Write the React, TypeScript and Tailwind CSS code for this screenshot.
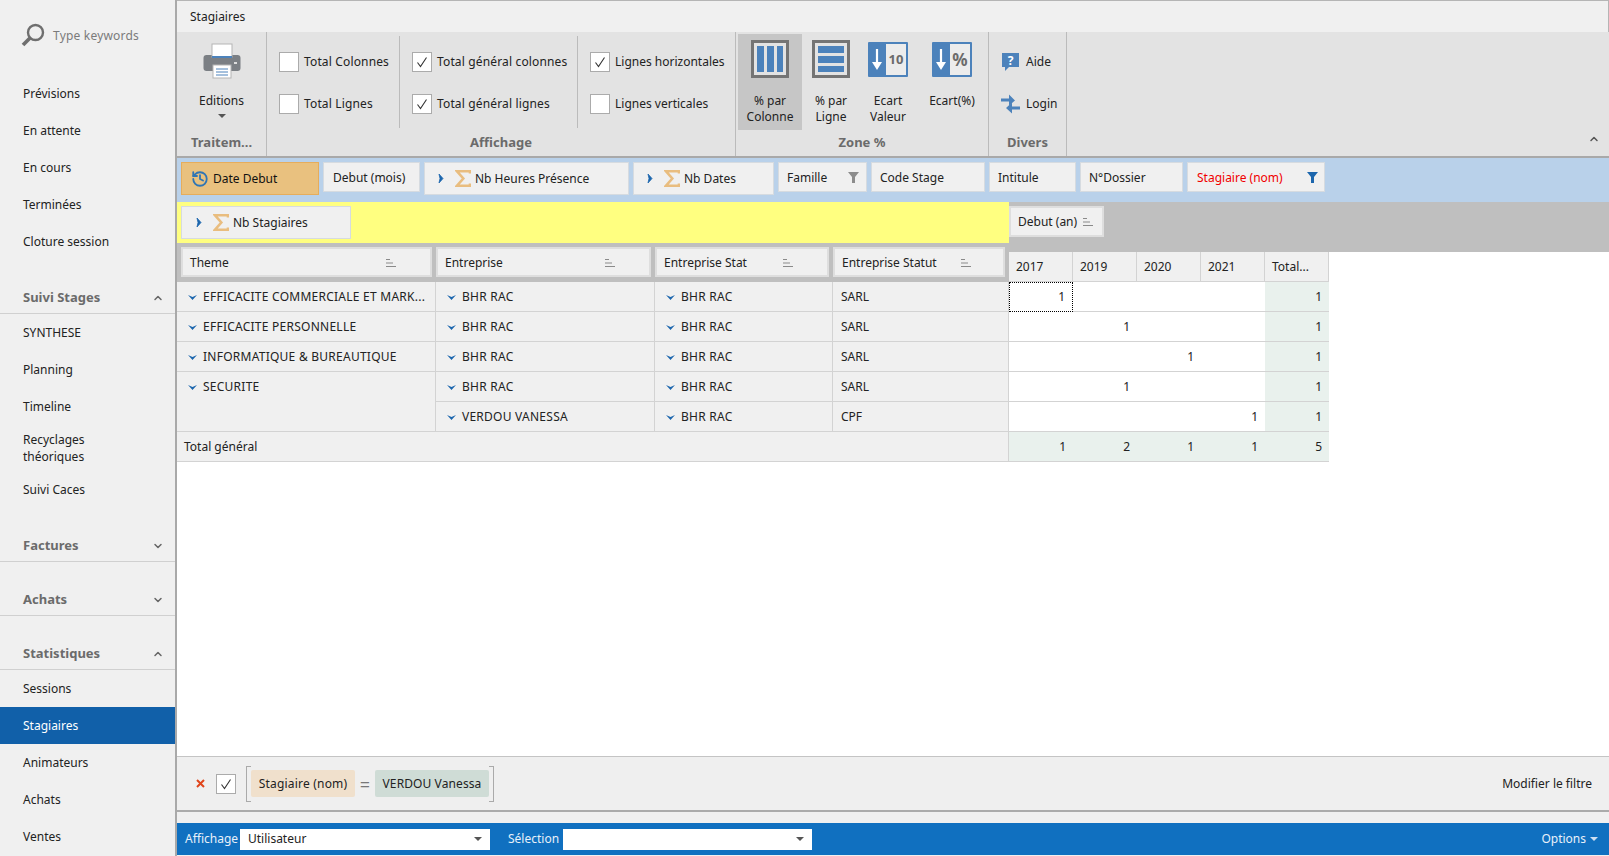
import { ChevronDown, ChevronUp, History } from "lucide-react";

const font = { fontFamily: '"Noto Sans", Tahoma, sans-serif' };

const Sort = () => (
  <svg width="11" height="10" viewBox="0 0 11 10" className="shrink-0">
    <path d="M0 1.500h4M0 5h7M0 8.500h10" stroke="#8a8a8a" strokeWidth="1" fill="none" />
  </svg>
);

const Funnel = ({ color }: { color: string }) => (
  <svg width="11" height="11" viewBox="0 0 11 11" className="shrink-0">
    <path d="M0 0h11L7 5v6H4V5z" fill={color} />
  </svg>
);

const Sigma = () => (
  <svg width="16" height="17" viewBox="0 0 16 17" className="shrink-0">
    <path d="M15 3.500V1.300H2L8.300 8.500L2 15.700H15v-2.200" stroke="#e9bd7f" strokeWidth="2.600" fill="none" />
  </svg>
);

const Right = () => (
  <svg width="6" height="9" viewBox="0 0 6 9" className="shrink-0">
    <path d="M1 0l4 4.500L1 9l1-4.500z" fill="#1c66ad" stroke="#1c66ad" strokeWidth="0.8" />
  </svg>
);

const Down = () => (
  <svg width="9" height="6" viewBox="0 0 9 6" className="shrink-0">
    <path d="M0 1l4.500 2L9 1 4.500 6z" fill="#1c66ad" />
  </svg>
);

const Check = ({ on }: { on?: boolean }) => (
  <div className="flex items-center justify-center bg-white border border-[#ababab] shrink-0 w-[20px] h-[20px]">
    {on && (
      <svg width="12" height="12" viewBox="0 0 12 12">
        <path d="M1.500 6.500L4.500 10.500L10.500 1.500" stroke="#333" strokeWidth="1.100" fill="none" />
      </svg>
    )}
  </div>
);

const CheckRow = ({ label, on }: { label: string; on?: boolean }) => (
  <div className="flex items-center h-[20px] gap-[5px] whitespace-nowrap">
    <Check on={on} />
    <span>{label}</span>
  </div>
);

const SideItem = ({ label, active }: { label: string; active?: boolean }) => (
  <div className={`h-[37px] flex items-center pl-[23px] ${active ? "bg-[#1160a9] text-white" : ""}`}>{label}</div>
);

const SideHead = ({ label, open, mt }: { label: string; open?: boolean; mt: string }) => (
  <div className={`h-[34px] pt-[2px] flex items-center justify-between pl-[23px] pr-[11px] border-b border-[#d0d0d0] ${mt}`}>
    <span className="font-bold text-[#6b6b6b] text-[13px]">{label}</span>
    {open ? <ChevronUp size={12} strokeWidth={3} color="#666" /> : <ChevronDown size={12} strokeWidth={3} color="#666" />}
  </div>
);

const Sidebar = () => (
  <div className="w-[175px] shrink-0 flex flex-col">
    <div className="h-[75px] pt-[23px] pl-[21px] flex items-start gap-[8px]">
      <svg width="24" height="24" viewBox="0 0 24 24">
        <circle cx="14.500" cy="9.500" r="7.500" stroke="#6f6f6f" strokeWidth="2.400" fill="none" />
        <path d="M9 15L2 22" stroke="#6f6f6f" strokeWidth="3.800" />
      </svg>
      <span className="text-[#7b7b7b] mt-[4px] tracking-[0.2px]">Type keywords</span>
    </div>
    <SideItem label="Prévisions" />
    <SideItem label="En attente" />
    <SideItem label="En cours" />
    <SideItem label="Terminées" />
    <SideItem label="Cloture session" />
    <SideHead label="Suivi Stages" open mt="mt-[20px]" />
    <SideItem label="SYNTHESE" />
    <SideItem label="Planning" />
    <SideItem label="Timeline" />
    <div className="h-[46px] flex items-center pl-[23px] leading-[17px]">
      Recyclages
      <br />
      théoriques
    </div>
    <SideItem label="Suivi Caces" />
    <SideHead label="Factures" mt="mt-[20px]" />
    <SideHead label="Achats" mt="mt-[20px]" />
    <SideHead label="Statistiques" open mt="mt-[20px]" />
    <SideItem label="Sessions" />
    <SideItem label="Stagiaires" active />
    <SideItem label="Animateurs" />
    <SideItem label="Achats" />
    <SideItem label="Ventes" />
  </div>
);

const GroupLabel = ({ label }: { label: string }) => (
  <div className="h-[26px] flex items-center justify-center font-bold text-[#6b6b6b] text-[13px]">{label}</div>
);

const ColsIcon = () => (
  <svg width="38" height="38" viewBox="0 0 38 38">
    <rect x="1.500" y="1.500" width="35" height="35" fill="#e3e3e3" stroke="#747474" strokeWidth="3" />
    <path d="M6 6h7v26H6zM16 6h7v26h-7zM26 6h6v26h-6z" fill="#4c82bb" />
  </svg>
);

const RowsIcon = () => (
  <svg width="38" height="38" viewBox="0 0 38 38">
    <rect x="1.500" y="1.500" width="35" height="35" fill="#e3e3e3" stroke="#747474" strokeWidth="3" />
    <path d="M6 6h26v7H6zM6 16h26v7H6zM6 26h26v6H6z" fill="#4c82bb" />
  </svg>
);

const EcartIcon = ({ text, size }: { text: string; size: string }) => (
  <div className="w-[40px] h-[35px] bg-[#4c82bb] flex rounded-[1px] mt-[2px]">
    <div className="w-[18px] flex items-center justify-center">
      <svg width="10" height="22" viewBox="0 0 10 22">
        <path d="M5 0v16" stroke="#fff" strokeWidth="2.200" />
        <path d="M0 13h10l-5 8z" fill="#fff" />
      </svg>
    </div>
    <div className={`my-[2px] mr-[2px] flex-1 bg-[#ececec] flex items-center justify-center font-bold text-[#6b6b6b] ${size}`}>
      {text}
    </div>
  </div>
);

const ZoneBtn = ({ w, icon, lines, active }: { w: string; icon: React.ReactNode; lines: string[]; active?: boolean }) => (
  <div className={`${w} h-[96px] flex flex-col items-center ${active ? "bg-[#c6c6c6]" : ""}`}>
    <div className="h-[59px] pt-[6px] flex justify-center">{icon}</div>
    {lines.map((l) => (
      <div key={l} className="h-[16px] leading-[16px] whitespace-nowrap">
        {l}
      </div>
    ))}
  </div>
);

const Ribbon = () => (
  <div className="h-[126px] bg-[#e3e3e3] flex border-b-2 border-[#a9a9a9] shrink-0">
    <div className="w-[90px] border-r border-[#bbbbbb] flex flex-col">
      <div className="flex-1 flex flex-col items-center">
        <svg width="38" height="36" viewBox="0 0 38 36" className="mt-[11px]">
          <rect x="0.500" y="12" width="37" height="16" rx="3" fill="#7b7f84" />
          <rect x="9" y="1" width="20" height="13" fill="#fff" stroke="#b5b5b5" />
          <rect x="9" y="13" width="20" height="2" fill="#4c82bb" />
          <rect x="10" y="22" width="18" height="13" fill="#fff" stroke="#b5b5b5" />
          <path d="M13 26h12M13 29h12M13 32h12" stroke="#4c82bb" strokeWidth="1" />
          <rect x="31" y="19" width="3" height="2" fill="#ddd" />
        </svg>
        <span className="mt-[14px] leading-[16px]">Editions</span>
        <div className="mt-[5px] w-0 h-0 border-x-[4px] border-x-transparent border-t-[4px] border-t-[#555]" />
      </div>
      <GroupLabel label="Traitem..." />
    </div>
    <div className="w-[469px] border-r border-[#bbbbbb] flex flex-col">
      <div className="flex-1 flex items-start">
        <div className="w-[133px] mt-[4px] h-[92px] pl-[12px] pt-[16px] border-r border-[#bbbbbb] flex flex-col gap-[22px] tracking-[0.15px]">
          <CheckRow label="Total Colonnes" />
          <CheckRow label="Total Lignes" />
        </div>
        <div className="w-[178px] mt-[4px] h-[92px] pl-[12px] pt-[16px] border-r border-[#bbbbbb] flex flex-col gap-[22px] tracking-[0.15px]">
          <CheckRow label="Total général colonnes" on />
          <CheckRow label="Total général lignes" on />
        </div>
        <div className="mt-[4px] h-[92px] pl-[12px] pt-[16px] flex flex-col gap-[22px]">
          <CheckRow label="Lignes horizontales" on />
          <CheckRow label="Lignes verticales" />
        </div>
      </div>
      <GroupLabel label="Affichage" />
    </div>
    <div className="w-[253px] border-r border-[#bbbbbb] flex flex-col">
      <div className="flex-1 flex items-start pl-[2px] pt-[2px]">
        <ZoneBtn w="w-[64px]" icon={<ColsIcon />} lines={["% par", "Colonne"]} active />
        <ZoneBtn w="w-[58px]" icon={<RowsIcon />} lines={["% par", "Ligne"]} />
        <ZoneBtn w="w-[56px]" icon={<EcartIcon text="10" size="text-[13px]" />} lines={["Ecart", "Valeur"]} />
        <ZoneBtn w="w-[72px]" icon={<EcartIcon text="%" size="text-[17px]" />} lines={["Ecart(%)"]} />
      </div>
      <GroupLabel label="Zone %" />
    </div>
    <div className="w-[78px] border-r border-[#bbbbbb] flex flex-col">
      <div className="flex-1 pl-[12px] pt-[19px] flex flex-col gap-[21px]">
        <div className="flex items-center h-[21px] gap-[6px]">
          <svg width="19" height="20" viewBox="0 0 19 20">
            <path d="M1 1h17v14H8l-4 4v-4H1z" fill="#4c82bb" />
            <text x="9.500" y="12.500" textAnchor="middle" fontSize="12" fontWeight="700" fill="#fff" fontFamily="Noto Sans">?</text>
          </svg>
          <span>Aide</span>
        </div>
        <div className="flex items-center h-[21px] gap-[6px]">
          <svg width="19" height="20" viewBox="0 0 19 20">
            <path d="M0 4.500h8v-4l6 6-6 5v-4H0z" fill="#4c82bb" />
            <path d="M19 12.500h-8v-4l-6 5.500 6 5.500v-4h8z" fill="#4c82bb" />
          </svg>
          <span>Login</span>
        </div>
      </div>
      <GroupLabel label="Divers" />
    </div>
    <div className="flex-1 flex items-end justify-end pr-[9px] pb-[11px]">
      <ChevronUp size={12} strokeWidth={3} color="#555" />
    </div>
  </div>
);

const Chip = ({ w, h, children, tone }: { w: string; h: string; children: React.ReactNode; tone?: string }) => (
  <div className={`${w} ${h} shrink-0 flex items-center border whitespace-nowrap ${tone ?? "bg-[#f0f0f0] border-[#d6dbe0]"}`}>{children}</div>
);

const FieldBar = () => (
  <div className="h-[44px] bg-[#b9d1ea] flex items-start gap-[4px] pl-[4px] pt-[4px] shrink-0">
    <Chip w="w-[138px]" h="h-[33px]" tone="bg-[#e9c17f] border-[#e6ad5c] pl-[9px] gap-[4px]">
      <History size={18} color="#2f75b5" strokeWidth={2.400} />
      <span className="text-[#111]">Date Debut</span>
    </Chip>
    <Chip w="w-[97px]" h="h-[30px] pl-[9px] pt-[1px]">Debut (mois)</Chip>
    <Chip w="w-[205px]" h="h-[33px] pl-[13px] gap-[11px]">
      <Right />
      <span className="flex items-center gap-[4px]">
        <Sigma />
        Nb Heures Présence
      </span>
    </Chip>
    <Chip w="w-[141px]" h="h-[33px] pl-[13px] gap-[11px]">
      <Right />
      <span className="flex items-center gap-[4px]">
        <Sigma />
        Nb Dates
      </span>
    </Chip>
    <Chip w="w-[89px]" h="h-[30px] pl-[8px] pr-[7px] pt-[1px] justify-between">
      Famille
      <Funnel color="#8c8c8c" />
    </Chip>
    <Chip w="w-[114px]" h="h-[30px] pl-[8px] pt-[1px]">Code Stage</Chip>
    <Chip w="w-[87px]" h="h-[30px] pl-[8px] pt-[1px]">Intitule</Chip>
    <Chip w="w-[103px]" h="h-[30px] pl-[8px] pt-[1px]">N°Dossier</Chip>
    <Chip w="w-[138px]" h="h-[30px] pl-[9px] pr-[6px] pt-[1px] justify-between">
      <span className="text-[#f00000]">Stagiaire (nom)</span>
      <Funnel color="#1c66ad" />
    </Chip>
  </div>
);

const HeadBtn = ({ w, label, pr }: { w: string; label: string; pr?: string }) => (
  <div className={`${w} h-[30px] shrink-0 bg-[#f0f0f0] border-2 border-[#dedede] flex items-center justify-between pl-[7px] pt-[1px] ${pr ?? "pr-[33px]"} whitespace-nowrap`}>
    {label}
    <Sort />
  </div>
);

const years = ["2017", "2019", "2020", "2021", "Total..."];
const cols = "grid grid-cols-[259px_219px_178px_176px_64px_64px_64px_64px_64px] w-[1152px]";
const leftCell = "bg-[#f0f0f0] border-r border-b border-[#d3d3d3] flex items-center whitespace-nowrap";

const Expand = ({ label }: { label: string }) => (
  <div className={`${leftCell} pl-[11px] gap-[6px] tracking-[0.25px]`}>
    <Down />
    <span>{label}</span>
  </div>
);

const Vals = ({ values, dotted }: { values: (string | null)[]; dotted?: boolean }) => (
  <>
    {values.map((v, i) => (
      <div
        key={i}
        className={`flex items-center justify-end pr-[7px] border-b border-[#d3d3d3] ${dotted && i === 0 ? "border border-dotted border-black" : ""} ${i === 4 ? "bg-[#e9f1ed]" : "bg-white"}`}
      >
        {v}
      </div>
    ))}
  </>
);

const Pivot = () => (
  <div className="flex-1 bg-white flex flex-col min-h-0">
    <div className="flex shrink-0">
      <div className="w-[832px] shrink-0">
        <div className="h-[41px] bg-[#ffff80] pl-[4px] pt-[4px]">
          <Chip w="w-[170px]" h="h-[33px] pl-[14px] gap-[11px]">
            <Right />
            <span className="flex items-center gap-[4px]">
              <Sigma />
              Nb Stagiaires
            </span>
          </Chip>
        </div>
        <div className="h-[39px] bg-[#bfbfbf] flex items-start pt-[4px] pl-[4px] gap-[4px]">
          <HeadBtn w="w-[251px]" label="Theme" />
          <HeadBtn w="w-[215px]" label="Entreprise" />
          <HeadBtn w="w-[174px]" label="Entreprise Stat" />
          <HeadBtn w="w-[172px]" label="Entreprise Statut" pr="pr-[31px]" />
        </div>
      </div>
      <div className="flex-1 flex flex-col">
        <div className="h-[50px] bg-[#bfbfbf]">
          <div className="w-[95px] h-[31px] bg-[#f0f0f0] border-2 border-[#dedede] flex items-center justify-between pl-[7px] pr-[8px] whitespace-nowrap mt-[4px]">
            Debut (an)
            <Sort />
          </div>
        </div>
        <div className="h-[30px] flex">
          {years.map((y) => (
            <div key={y} className="w-[64px] bg-[#f0f0f0] border-r border-b border-[#d3d3d3] flex items-center pl-[7px] whitespace-nowrap">
              {y}
            </div>
          ))}
        </div>
      </div>
    </div>
    <div className={`${cols} auto-rows-[30px]`}>
      <Expand label="EFFICACITE COMMERCIALE ET MARK..." />
      <Expand label="BHR RAC" />
      <Expand label="BHR RAC" />
      <div className={`${leftCell} pl-[8px]`}>SARL</div>
      <Vals values={["1", null, null, null, "1"]} dotted />

      <Expand label="EFFICACITE PERSONNELLE" />
      <Expand label="BHR RAC" />
      <Expand label="BHR RAC" />
      <div className={`${leftCell} pl-[8px]`}>SARL</div>
      <Vals values={[null, "1", null, null, "1"]} />

      <Expand label="INFORMATIQUE & BUREAUTIQUE" />
      <Expand label="BHR RAC" />
      <Expand label="BHR RAC" />
      <div className={`${leftCell} pl-[8px]`}>SARL</div>
      <Vals values={[null, null, "1", null, "1"]} />

      <div className={`${leftCell} row-span-2 !items-start pt-[6px] pl-[11px] gap-[6px] tracking-[0.25px]`}>
        <span className="mt-[6px]">
          <Down />
        </span>
        <span>SECURITE</span>
      </div>
      <Expand label="BHR RAC" />
      <Expand label="BHR RAC" />
      <div className={`${leftCell} pl-[8px]`}>SARL</div>
      <Vals values={[null, "1", null, null, "1"]} />

      <Expand label="VERDOU VANESSA" />
      <Expand label="BHR RAC" />
      <div className={`${leftCell} pl-[8px]`}>CPF</div>
      <Vals values={[null, null, null, "1", "1"]} />

      <div className={`${leftCell} col-span-4 pl-[7px]`}>Total général</div>
      {["1", "2", "1", "1", "5"].map((v, i) => (
        <div key={i} className="bg-[#e9f1ed] border-b border-[#d3d3d3] flex items-center justify-end pr-[7px]">
          {v}
        </div>
      ))}
    </div>
  </div>
);

const FilterBar = () => (
  <div className="h-[56px] shrink-0 bg-[#efefef] border-t border-t-[#c4c4c4] border-b-2 border-b-[#ababab] flex items-center justify-between pl-[19px] pr-[17px]">
    <div className="flex items-center">
      <svg width="9" height="9" viewBox="0 0 9 9">
        <path d="M1 1l7 7M8 1L1 8" stroke="#e0451b" strokeWidth="2" />
      </svg>
      <div className="ml-[11px]">
        <Check on />
      </div>
      <div className="ml-[10px] w-[5px] h-[36px] border border-r-0 border-[#aaaaaa]" />
      <div className="h-[27px] w-[104px] bg-[#f0e0cc] rounded-[2px] flex items-center justify-center whitespace-nowrap tracking-[0.2px]">Stagiaire (nom)</div>
      <div className="w-[20px] text-center text-[#777] text-[18px] leading-none">=</div>
      <div className="h-[27px] w-[114px] bg-[#cfdcd6] rounded-[2px] flex items-center justify-center whitespace-nowrap tracking-[0.1px]">VERDOU Vanessa</div>
      <div className="w-[5px] h-[36px] border border-l-0 border-[#aaaaaa]" />
    </div>
    <span>Modifier le filtre</span>
  </div>
);

const Select = ({ w, value }: { w: string; value?: string }) => (
  <div className={`${w} h-[21px] bg-white flex items-center justify-between pl-[8px] pr-[8px] text-[#222]`}>
    <span>{value}</span>
    <div className="w-0 h-0 border-x-[4px] border-x-transparent border-t-[4px] border-t-[#555]" />
  </div>
);

const StatusBar = () => (
  <div className="h-[32px] mb-[1px] shrink-0 bg-[#1070c0] text-[#e8f1fa] flex items-center pl-[8px] pr-[11px]">
    <span className="w-[55px]">Affichage</span>
    <Select w="w-[250px]" value="Utilisateur" />
    <span className="ml-[18px] w-[55px]">Sélection</span>
    <Select w="w-[249px]" />
    <div className="ml-auto flex items-center gap-[4px]">
      <span>Options</span>
      <div className="w-0 h-0 border-x-[4px] border-x-transparent border-t-[4px] border-t-[#cfe0f2]" />
    </div>
  </div>
);

export default function App() {
  return (
    <div className="w-[1609px] h-[856px] flex bg-[#f0f0f0] text-[12px] text-[#222] overflow-hidden" style={font}>
      <Sidebar />
      <div className="flex-1 min-w-0 flex flex-col border-l-2 border-[#a9a9a9]">
        <div className="h-[32px] shrink-0 border-t border-r border-[#b5b5b5] flex items-center pl-[13px]">Stagiaires</div>
        <Ribbon />
        <FieldBar />
        <Pivot />
        <FilterBar />
        <div className="h-[11px] shrink-0" />
        <StatusBar />
      </div>
    </div>
  );
}
